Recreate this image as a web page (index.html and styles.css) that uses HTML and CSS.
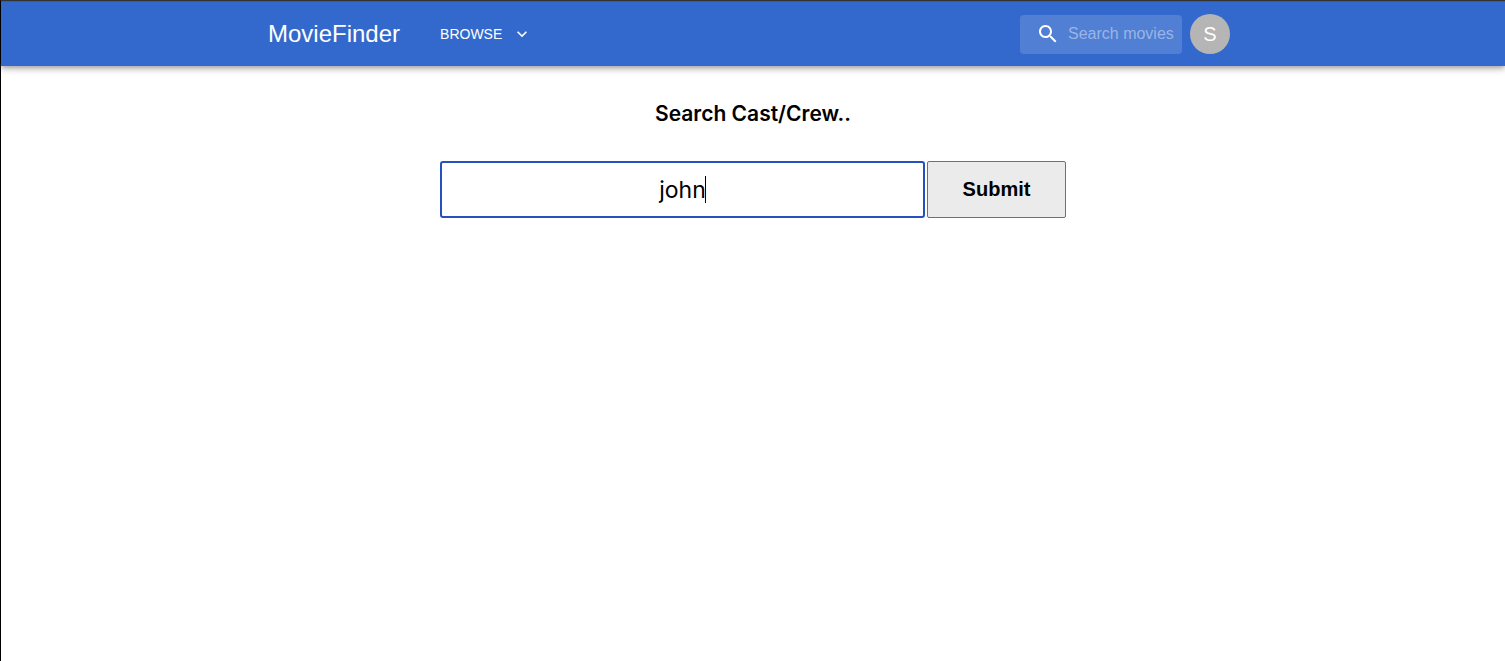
FILE: index.html
```html
<!DOCTYPE html>
<html lang="en">
<head>
<meta charset="utf-8">
<title>MovieFinder</title>
<link rel="stylesheet" href="styles.css">
</head>
<body>
<header class="app-bar">
  <div class="toolbar">
    <a class="brand" href="#">MovieFinder</a>
    <button class="browse" type="button">BROWSE
      <svg class="browse-icon" viewBox="0 0 24 24" aria-hidden="true"><path d="M16.6 8.6 12 13.2 7.4 8.6 6 10l6 6 6-6z"/></svg>
    </button>
    <label class="search">
      <svg class="search-icon" viewBox="0 0 24 24" aria-hidden="true"><path d="M15.5 14h-.79l-.28-.27C15.41 12.59 16 11.11 16 9.5 16 5.91 13.09 3 9.5 3S3 5.91 3 9.5 5.91 16 9.5 16c1.61 0 3.09-.59 4.23-1.57l.27.28v.79l5 4.99L20.49 19l-4.99-5zm-6 0C7.01 14 5 11.99 5 9.5S7.01 5 9.5 5 14 7.01 14 9.5 11.99 14 9.5 14z"/></svg>
      <input class="search-input" type="text" placeholder="Search movies" aria-label="Search movies">
    </label>
    <button class="avatar" type="button" aria-label="Account">S</button>
  </div>
</header>
<main class="page">
  <h1 class="title"><label for="person">Search Cast/Crew..</label></h1>
  <form class="person-form">
    <div class="field">
      <input class="person-input" id="person" type="text" value="john">
      <span class="caret"></span>
    </div>
    <button class="submit" type="submit">Submit</button>
  </form>
</main>
</body>
</html>
```
FILE: styles.css
```css
* { box-sizing: border-box; }
body {
  margin: 0;
  min-height: 100vh;
  border-top: 1px solid #333;
  border-left: 1px solid #000;
  background: #fff;
  color: #000;
  font-family: "Liberation Sans", Arial, sans-serif;
}
.app-bar {
  border-top: 1px solid #4b5a78;
  background: #3369cc;
  box-shadow: 0 2px 4px -1px rgba(0, 0, 0, .2), 0 4px 5px rgba(0, 0, 0, .14), 0 1px 10px rgba(0, 0, 0, .12);
}
.toolbar {
  display: flex;
  align-items: center;
  width: 100%;
  max-width: 970px;
  height: 64px;
  margin: 0 auto;
  padding-right: 8px;
  color: #fff;
}
.brand {
  color: inherit;
  font-size: 24px;
  line-height: 32px;
  text-decoration: none;
}
.browse {
  display: flex;
  align-items: center;
  gap: 10px;
  margin: 0 auto 0 40px;
  padding: 0;
  border: 0;
  background: none;
  color: inherit;
  font: 14px/24px "Liberation Sans", Arial, sans-serif;
}
.browse-icon { width: 20px; height: 20px; fill: currentColor; }
.search {
  display: flex;
  align-items: center;
  gap: 8px;
  width: 162px;
  height: 39px;
  margin-right: 8px;
  padding: 0 8px 0 16px;
  border-radius: 4px;
  background: rgba(255, 255, 255, .15);
}
.search-icon { flex: none; width: 24px; height: 24px; fill: #fff; }
.search-input {
  flex: 1;
  min-width: 0;
  padding: 0;
  border: 0;
  outline: 0;
  background: none;
  color: #fff;
  font: 16px/20px "Liberation Sans", Arial, sans-serif;
}
.search-input::placeholder { color: #9ab5e6; opacity: 1; }
.avatar {
  width: 40px;
  height: 40px;
  padding: 0;
  border: 0;
  border-radius: 50%;
  background: #b5b5b5;
  color: #fff;
  font: 20px/40px "Liberation Sans", Arial, sans-serif;
}
.page { padding: 32px 16px; }
.title {
  margin: 0 0 31px;
  font: 600 21px/32px Inter, sans-serif;
  text-align: center;
}
.person-form { display: flex; justify-content: center; gap: 2px; }
.field { position: relative; flex: 0 1 485px; min-width: 0; }
.person-input {
  display: block;
  width: 100%;
  height: 57px;
  padding: 0 16px;
  border: 2px solid #2450c0;
  border-radius: 3px;
  outline: 0;
  background: #fff;
  color: #000;
  font: 23px/32px Inter, sans-serif;
  text-align: center;
}
.caret {
  position: absolute;
  top: 15px;
  left: calc(50% + 22px);
  width: 1px;
  height: 27px;
  background: #000;
}
.submit {
  width: 139px;
  height: 57px;
  padding: 0 0 2px;
  border: 1px solid #707070;
  border-radius: 2px;
  background: #ebebeb;
  color: #000;
  font: 700 20px/24px "Liberation Sans", Arial, sans-serif;
}
```
